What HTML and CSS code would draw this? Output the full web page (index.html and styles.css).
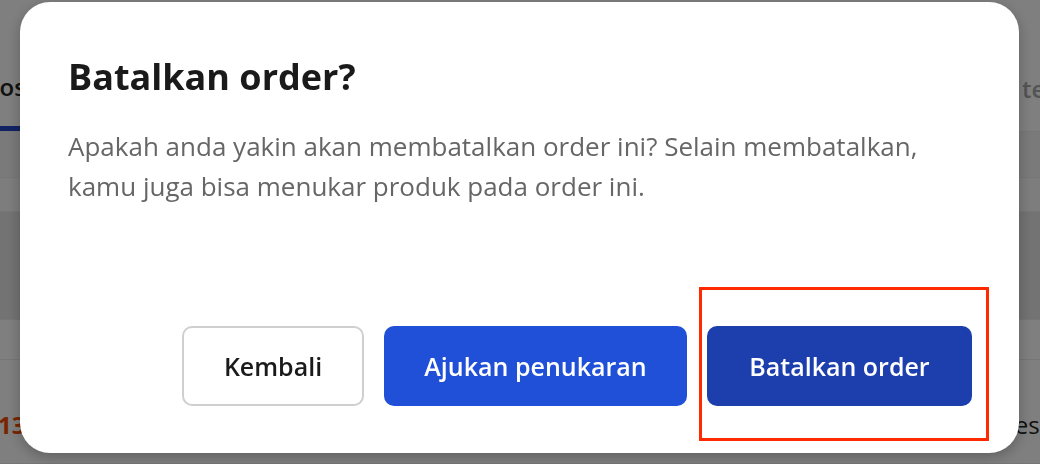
FILE: index.html
```html
<!DOCTYPE html>
<html lang="id">
<head>
<meta charset="utf-8">
<title>Batalkan order</title>
<link rel="stylesheet" href="styles.css">
</head>
<body>
<div class="page">
  <div class="tabs">
    <div class="tab tab-active">Diproses</div>
    <div class="tab-spacer"></div>
    <div class="tab">Sudah terkirim</div>
  </div>
  <div class="row row-light"></div>
  <div class="row row-sep"></div>
  <div class="row row-dark"></div>
  <div class="row row-plain"></div>
  <div class="row row-bottom">
    <span class="price">13.500</span>
    <span class="status">Selesai</span>
  </div>
</div>

<div class="overlay">
  <div class="modal">
    <h1 class="modal-title">Batalkan order?</h1>
    <p class="modal-text">Apakah anda yakin akan membatalkan order ini? Selain membatalkan, kamu juga bisa menukar produk pada order ini.</p>
    <div class="actions">
      <button class="btn btn-outline">Kembali</button>
      <button class="btn btn-primary">Ajukan penukaran</button>
      <button class="btn btn-danger">Batalkan order</button>
    </div>
    <div class="highlight"></div>
  </div>
</div>
</body>
</html>
```

FILE: styles.css
```css
* { box-sizing: border-box; }

html, body {
  margin: 0;
  padding: 0;
  width: 1040px;
  height: 464px;
  overflow: hidden;
  font-family: "Open Sans", "Noto Sans", sans-serif;
  background: #ffffff;
}

.page {
  width: 1040px;
  height: 464px;
  display: flex;
  flex-direction: column;
}

.tabs {
  height: 132px;
  display: flex;
  align-items: stretch;
  border-bottom: 1px solid #eeeeee;
}

.tab {
  display: flex;
  align-items: center;
  font-size: 24px;
  font-weight: 600;
  color: #a8a8a8;
  padding-top: 66px;
  padding-bottom: 20px;
  white-space: nowrap;
}

.tab-active {
  margin-left: -50px;
  color: #222222;
  border-bottom: 5px solid #2447c9;
  padding-right: 4px;
}

.tab-spacer { flex: 1; }

.tab:last-child { margin-right: -76px; }

.row { border-bottom: 1px solid #ececec; }
.row-light { height: 46px; background: #f4f4f4; }
.row-sep { height: 34px; background: #fafafa; }
.row-dark { height: 108px; background: #e6e6e6; }
.row-plain { height: 40px; }

.row-bottom {
  flex: 1;
  display: flex;
  justify-content: space-between;
  align-items: center;
  padding-top: 26px;
  font-size: 24px;
  white-space: nowrap;
}

.price {
  margin-left: -2px;
  color: #f04a00;
  font-weight: 700;
}

.status {
  margin-right: -19px;
  color: #222222;
}

.overlay {
  position: fixed;
  inset: 0;
  background: rgba(0, 0, 0, 0.5);
}

.modal {
  position: absolute;
  left: 20px;
  top: 2px;
  width: 999px;
  height: 451px;
  background: #ffffff;
  border-radius: 30px;
  box-shadow: 0 4px 14px rgba(0, 0, 0, 0.25);
  padding: 52px 47px 47px 48px;
  display: flex;
  flex-direction: column;
}

.modal-title {
  margin: 0;
  font-size: 36px;
  line-height: 46px;
  font-weight: 700;
  color: #1a1a1a;
}

.modal-text {
  margin: 26px 0 0;
  font-size: 26px;
  line-height: 40px;
  color: #666666;
}

.actions {
  margin-top: auto;
  display: flex;
  justify-content: flex-end;
  gap: 20px;
}

.btn {
  height: 80px;
  padding: 0;
  border-radius: 10px;
  font-family: inherit;
  font-size: 25px;
  font-weight: 600;
  border: 2px solid transparent;
  cursor: pointer;
}

.btn-outline {
  width: 182px;
  background: #ffffff;
  border-color: #cfcfcf;
  color: #1a1a1a;
}

.btn-primary {
  width: 303px;
  background: #2050d8;
  color: #ffffff;
}

.btn-danger {
  width: 265px;
  background: #1d3fae;
  color: #ffffff;
}

.highlight {
  position: absolute;
  left: 679px;
  top: 285px;
  width: 290px;
  height: 154px;
  border: 3px solid #ff2a00;
  pointer-events: none;
}
```
